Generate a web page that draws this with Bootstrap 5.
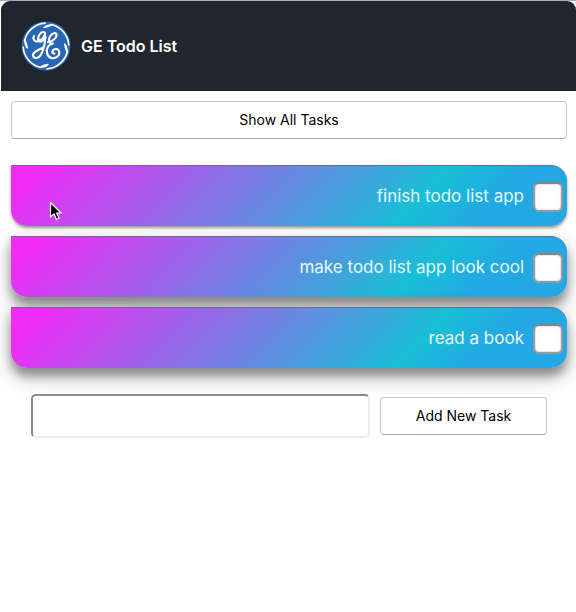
<!DOCTYPE html>
<html lang="en">
<head>
<meta charset="utf-8">
<meta name="viewport" content="width=device-width, initial-scale=1">
<title>GE Todo List</title>
<link href="https://cdn.jsdelivr.net/npm/bootstrap@5.3.0/dist/css/bootstrap.min.css" rel="stylesheet">
<style>
body { font-family: Inter, "Liberation Sans", sans-serif; background: #fff; }
.app-window { border-top: 1px solid #a9abad; padding-left: 1px; }
.app-header { background: #20262e; height: 90px; padding: 0 20px; gap: 10px; border-radius: 9px 9px 0 0; }
.app-title { font-size: 16px; line-height: 24px; font-weight: 600; color: #fff; }
.app-main { padding: 10px 9px 10px 10px; }
.plain-btn { height: 38px; padding: 0 12px; font-size: 14px; line-height: 20px; color: #000; background: #fff; border: 1px solid #c9c9c9; border-bottom-color: #aaa; border-radius: 4px; }
.plain-btn:hover { background: #f6f6f6; border-color: #aaa; }
.task-list { margin-top: 26px; gap: 10px; }
.task { height: 61px; padding: 2px 4px 0 10px; gap: 9px; color: #e6faff; font-size: 17px; line-height: 24px;
  border-top: 1px solid #6f6f7c; border-radius: 0 16px 16px 16px;
  background: linear-gradient(135deg, #f02bf6 5%, #18bfd6 72%, #24a8e4 84%);
  box-shadow: 0 8px 10px rgba(0,0,0,.32), 0 8px 22px rgba(0,0,0,.26); }
.task label { padding-bottom: 3px; }
.task-pressed { box-shadow: 0 2px 3px rgba(0,0,0,.4); }
.task-check { appearance: none; width: 30px; height: 30px; margin: 0; background: #fff; border: 2px solid #999; border-top-color: #858585; border-radius: 6px; box-shadow: inset 0 0 2px #aaa; }
.task-check:checked { background: #18bfd6; }
.add-form { margin-top: 26px; padding: 0 20px; gap: 10px; }
.task-input { height: 44px; min-width: 0; padding: 0 10px; font-size: 16px; background: #fff; border: 2px solid; border-color: #8b8b8b #ececec #ececec #8b8b8b; border-radius: 5px; }
.add-btn { min-width: 167px; }
.pointer { left: 38px; top: 35px; }
</style>
<script src="https://cdn.jsdelivr.net/npm/bootstrap@5.3.0/dist/js/bootstrap.bundle.min.js"></script>
</head>
<body>
<div class="app-window">
  <header class="app-header d-flex align-items-center">
    <svg width="50" height="50" viewBox="0 0 50 50" fill="none" stroke="#fff" stroke-linecap="round" stroke-linejoin="round" aria-hidden="true">
      <circle cx="25" cy="25" r="24.5" fill="#2865b5" stroke="none"/>
      <g id="rim">
        <path d="M30 3.500A22.500 22.500 0 0 1 47.800 24" stroke-width="1.700"/>
        <path d="M23 6.500Q25 3.800 31 3.800Q28 5.800 23 6.500Z" fill="#fff" stroke-width="1.300"/>
      </g>
      <use href="#rim" transform="rotate(90 25 25)"/>
      <use href="#rim" transform="rotate(180 25 25)"/>
      <use href="#rim" transform="rotate(270 25 25)"/>
      <path stroke-width="2.100" d="M13 15C11 19 15 22 19 19.500C23 17 26 11 22.500 11C19 11 15.500 17 18 20C20 22 23 19 24.500 15.500C24 22 22 31 19 35C16 38.500 12 37 12 34C12 30.500 18 29 23 26"/>
      <path stroke-width="2.100" d="M27 21C31 21 36 17 35.500 13.500C35 11 31 12 29 15.500C27 19 28 23 32 22.500C27 23 25 28 26 32C27 37.500 33 38.500 36.500 35.500C40 32 38 27.500 34.500 28C31 28.500 30 33 33.500 32.500"/>
    </svg>
    <h1 class="app-title m-0">GE Todo List</h1>
  </header>
  <main class="app-main">
    <button type="button" class="plain-btn w-100 d-block">Show All Tasks</button>
    <ul class="task-list list-unstyled d-flex flex-column mb-0">
      <li class="task task-pressed position-relative d-flex align-items-center justify-content-end">
        <label for="task1">finish todo list app</label>
        <input class="task-check" type="checkbox" id="task1">
        <svg class="pointer position-absolute" width="14" height="21" viewBox="0 0 14 21" aria-hidden="true"><path d="M1.500 1.500V16L5 13L7.500 18.500L10 17.300L7.700 12H12Z" fill="#000" stroke="#fff" stroke-width="1.200"/></svg>
      </li>
      <li class="task d-flex align-items-center justify-content-end">
        <label for="task2">make todo list app look cool</label>
        <input class="task-check" type="checkbox" id="task2">
      </li>
      <li class="task d-flex align-items-center justify-content-end">
        <label for="task3">read a book</label>
        <input class="task-check" type="checkbox" id="task3">
      </li>
    </ul>
    <form class="add-form position-relative d-flex align-items-center">
      <input class="task-input flex-grow-1" type="text" aria-label="New task">
      <button type="button" class="plain-btn add-btn">Add New Task</button>
    </form>
  </main>
</div>
</body>
</html>
